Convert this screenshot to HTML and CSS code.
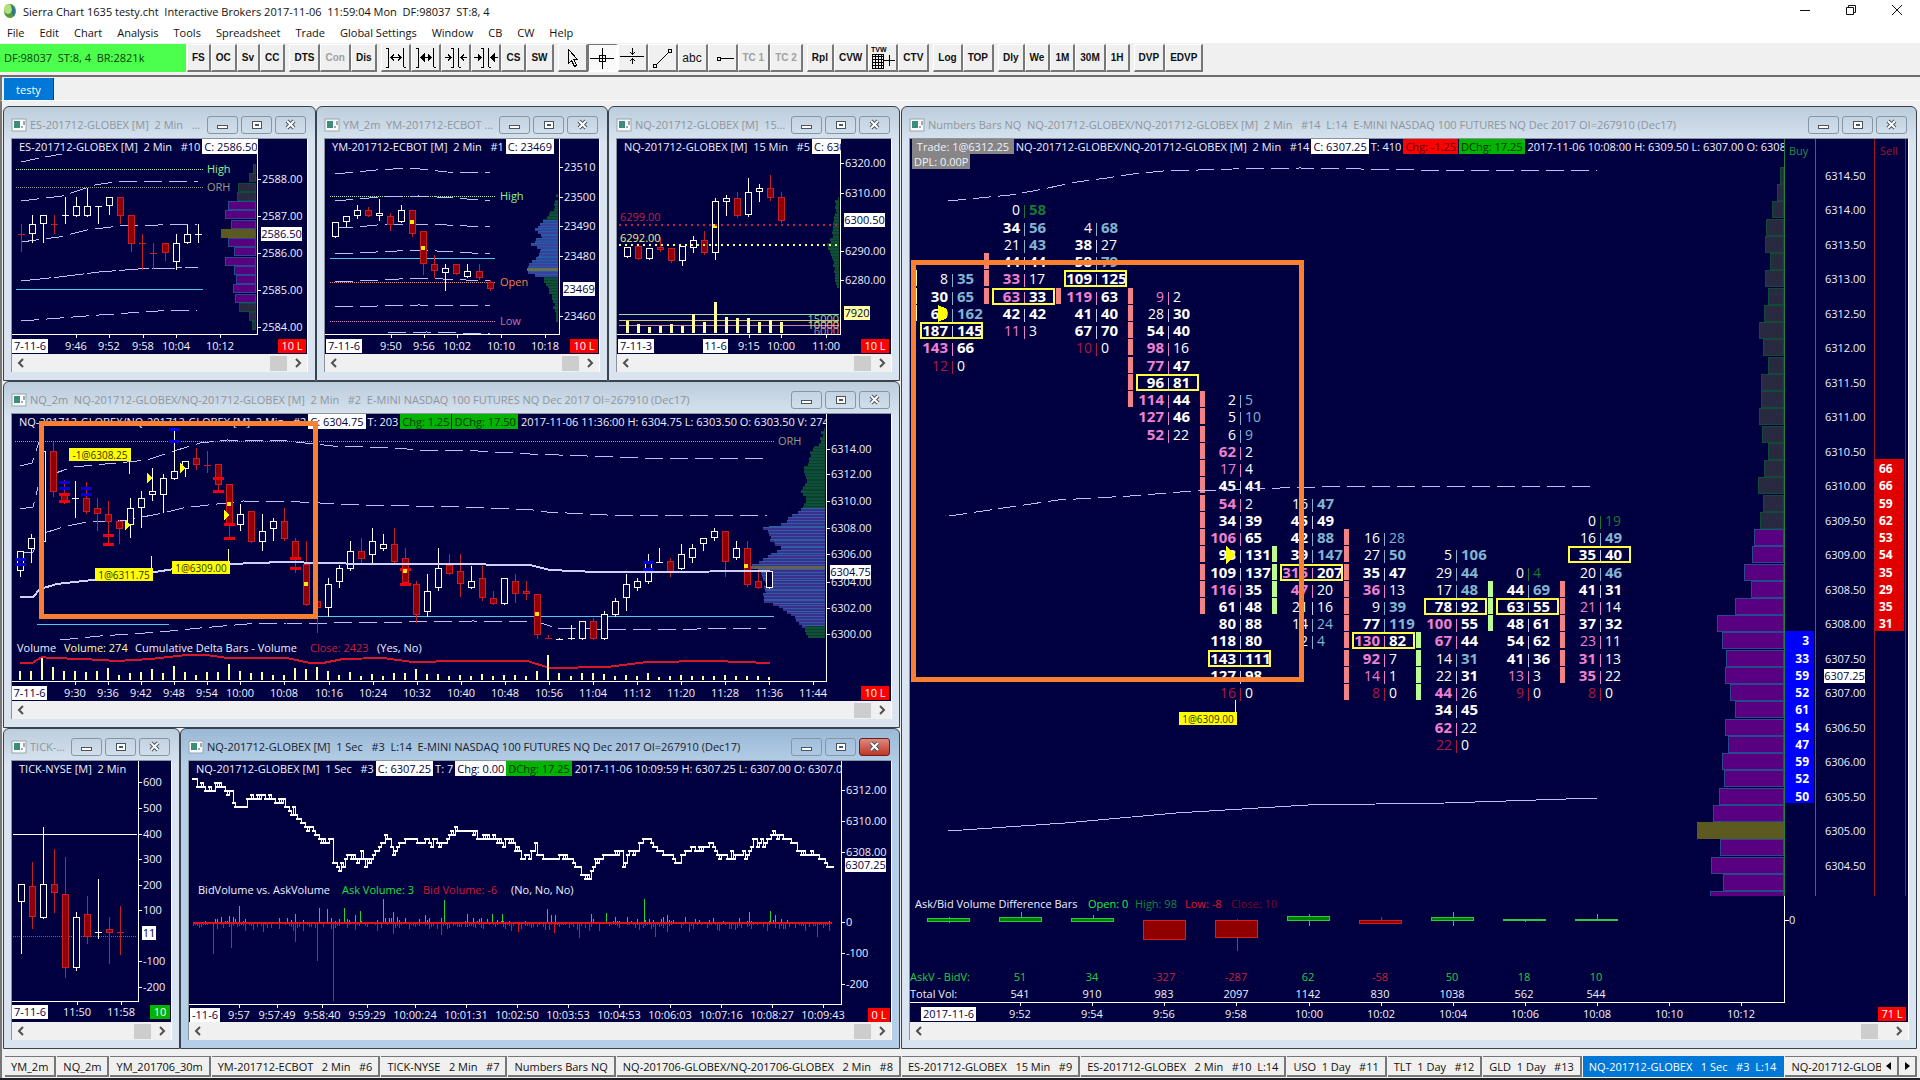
FILE: index.html
```
<!DOCTYPE html>
<html lang="en">
<head>
    <meta charset="utf-8">
    <title>Sierra Chart 1635 testy.cht</title>
    <link rel="stylesheet" href="styles.css">
</head>
<body>
    <header class="app-title">
        <svg class="app-icon" viewBox="0 0 14 16"><ellipse cx="7" cy="8" rx="6" ry="7" fill="#4f9a3a"/><ellipse cx="5" cy="6" rx="4" ry="5" fill="#b4e07c"/><path d="M8 2Q14 6 11 13Q8 10 9 7Z" fill="#2f6fa8"/></svg>
        <span class="app-name">Sierra Chart 1635 testy.cht&nbsp; Interactive Brokers 2017-11-06&nbsp; 11:59:04 Mon&nbsp; DF:98037&nbsp; ST:8, 4</span>
        <div class="app-controls">
            <button aria-label="Minimize"><svg viewBox="0 0 12 12"><path d="M1 6.5H11"/></svg></button>
            <button aria-label="Restore"><svg viewBox="0 0 12 12"><path d="M1.5 3.5H8.5V10.5H1.5ZM3.5 3V1.5H10.5V8.5H9"/></svg></button>
            <button aria-label="Close"><svg viewBox="0 0 12 12"><path d="M1 1L11 11M11 1L1 11"/></svg></button>
        </div>
    </header>

    <nav class="menu">
        <button>File</button><button>Edit</button><button>Chart</button><button>Analysis</button><button>Tools</button><button>Spreadsheet</button><button>Trade</button><button>Global Settings</button><button>Window</button><button>CB</button><button>CW</button><button>Help</button>
    </nav>

    <div class="toolbar">
        <div class="status">DF:98037&nbsp; ST:8, 4&nbsp; BR:2821k</div>
        <div class="tools"><button>FS</button><button>OC</button><button>Sv</button><button>CC</button></div>
        <div class="tools"><button>DTS</button><button disabled>Con</button><button>Dis</button></div>
        <div class="tools">
            <button class="icon" aria-label="Increase spacing"><svg viewBox="0 0 24 24"><path d="M4.5 2V21M4.5 21H2M19.5 2V21M19.5 21H22M4.5 2H2M7 11.5H17M10 8.5L7 11.5L10 14.5M14 8.5L17 11.5L14 14.5"/></svg></button>
            <button class="icon" aria-label="Increase spacing more"><svg viewBox="0 0 24 24"><path d="M4.5 2V21M4.5 21H2M19.5 2V21M19.5 21H22M4.5 2H2M7 11.5H17"/><path class="solid" d="M10 8.5L7 11.5L10 14.5ZM14 8.5L17 11.5L14 14.5Z"/></svg></button>
            <button class="icon" aria-label="Decrease spacing"><svg viewBox="0 0 24 24"><path d="M9.5 2V21M9.5 21H7M14.5 2V21M14.5 21H17M9.5 2H7M1 11.5H7M17 11.5H23M4 8.5L7 11.5L4 14.5M20 8.5L17 11.5L20 14.5"/></svg></button>
            <button class="icon" aria-label="Decrease spacing more"><svg viewBox="0 0 24 24"><path d="M9.5 2V21M9.5 21H7M14.5 2V21M14.5 21H17M9.5 2H7M0 11.5H7M17 11.5H24"/><path class="solid" d="M4 8.5L7 11.5L4 14.5ZM20 8.5L17 11.5L20 14.5Z"/></svg></button>
            <button>CS</button><button>SW</button>
        </div>
        <div class="tools">
            <button class="icon" aria-label="Pointer"><svg viewBox="0 0 24 24"><path d="M8.5 3.5V17.5L11.5 14.5L14.5 20.5L16.5 19.5L14 13.5H17.5Z"/></svg></button>
            <button class="icon pressed" aria-label="Crosshair"><svg viewBox="0 0 24 24"><path d="M0 12.5H24M12.5 2V23M9.5 9.5H15.5V15.5H9.5Z"/></svg></button>
            <button class="icon" aria-label="Horizontal line"><svg viewBox="0 0 24 24"><path d="M0 10.5H24M12.5 2V8M10 6L12.5 8.5L15 6M12.5 18V13M10 15L12.5 12.5L15 15"/></svg></button>
            <button class="icon" aria-label="Trend line"><svg viewBox="0 0 24 24"><path d="M3.5 18.5H6.5V21.5H3.5ZM18.5 3.5H21.5V6.5H18.5ZM6.5 18.5L18.5 6.5"/></svg></button>
            <button class="icon plain">abc</button>
            <button class="icon" aria-label="Ray"><svg viewBox="0 0 24 24"><path d="M7.5 11.5H10.5V14.5H7.5ZM10.5 12.5H24"/></svg></button>
            <button disabled>TC 1</button><button disabled>TC 2</button>
        </div>
        <div class="tools">
            <button>Rpl</button><button>CVW</button>
            <button class="icon" aria-label="Trade volume window"><svg viewBox="0 0 24 24"><text x="0" y="6">TVW</text><path d="M1.5 8.5H12.5V22.5H1.5ZM1 10.5H13M1 13.5H13M1 16.5H13M1 19.5H13M4.5 8V22M7.5 8V22M10.5 8V22M13 14.5H24M18.5 9V20"/></svg></button>
            <button>CTV</button>
        </div>
        <div class="tools"><button>Log</button><button>TOP</button></div>
        <div class="tools"><button>Dly</button><button>We</button><button>1M</button><button>30M</button><button>1H</button></div>
        <div class="tools"><button>DVP</button><button>EDVP</button></div>
    </div>

    <div class="chartbooks"><button>testy</button></div>

    <main class="workspace">
        <div class="left">
            <div class="row top-row">
                <section class="window">
                    <div class="caption"><span class="name">ES-201712-GLOBEX [M]&nbsp; 2 Min &nbsp; #10 L:14</span></div>
                    <div class="client">
                        <div class="chart" id="es">
                            <div class="legend axis-50"><span>ES-201712-GLOBEX [M]&nbsp; 2 Min &nbsp; #10</span><span class="white">C: 2586.50</span></div>
                        </div>
                    </div>
                </section>
                <section class="window">
                    <div class="caption"><span class="name">YM_2m&nbsp; YM-201712-ECBOT [M]&nbsp; 2 Min</span></div>
                    <div class="client">
                        <div class="chart" id="ym">
                            <div class="legend axis-40"><span>YM-201712-ECBOT [M]&nbsp; 2 Min &nbsp; #1</span><span class="white">C: 23469</span></div>
                        </div>
                    </div>
                </section>
                <section class="window">
                    <div class="caption"><span class="name">NQ-201712-GLOBEX [M]&nbsp; 15 Min</span></div>
                    <div class="client">
                        <div class="chart" id="nq15">
                            <div class="legend axis-50"><span>NQ-201712-GLOBEX [M]&nbsp; 15 Min &nbsp; #5</span><span class="white">C: 6300.50</span></div>
                        </div>
                    </div>
                </section>
            </div>

            <section class="window">
                <div class="caption"><span class="name">NQ_2m&nbsp; NQ-201712-GLOBEX/NQ-201712-GLOBEX [M]&nbsp; 2 Min &nbsp; #2&nbsp; E-MINI NASDAQ 100 FUTURES NQ Dec 2017 OI=267910 (Dec17)</span></div>
                <div class="client">
                    <div class="chart" id="nq2">
                        <div class="legend axis-64"><span>NQ-201712-GLOBEX/NQ-201712-GLOBEX [M]&nbsp; 2 Min &nbsp; #2</span><span class="white">C: 6304.75</span><span>T: 203</span><span class="green">Chg: 1.25</span><span class="green">DChg: 17.50</span><span>2017-11-06 11:36:00 H: 6304.75 L: 6303.50 O: 6303.50 V: 274</span></div>
                        <div class="highlight"></div>
                    </div>
                </div>
            </section>

            <div class="row bottom-row">
                <section class="window">
                    <div class="caption"><span class="name">TICK-NYSE [M]&nbsp; 2 Min</span></div>
                    <div class="client">
                        <div class="chart" id="tick">
                            <div class="legend axis-32"><span>TICK-NYSE [M]&nbsp; 2 Min</span></div>
                        </div>
                    </div>
                </section>
                <section class="window active">
                    <div class="caption"><span class="name">NQ-201712-GLOBEX [M]&nbsp; 1 Sec &nbsp; #3&nbsp; L:14&nbsp; E-MINI NASDAQ 100 FUTURES NQ Dec 2017 OI=267910 (Dec17)</span></div>
                    <div class="client">
                        <div class="chart" id="sec">
                            <div class="legend axis-50"><span>NQ-201712-GLOBEX [M]&nbsp; 1 Sec &nbsp; #3</span><span class="white">C: 6307.25</span><span>T: 7</span><span class="white">Chg: 0.00</span><span class="green">DChg: 17.25</span><span>2017-11-06 10:09:59 H: 6307.25 L: 6307.00 O: 6307.00</span></div>
                        </div>
                    </div>
                </section>
            </div>
        </div>

        <section class="window">
            <div class="caption"><span class="name">Numbers Bars NQ&nbsp; NQ-201712-GLOBEX/NQ-201712-GLOBEX [M]&nbsp; 2 Min &nbsp; #14&nbsp; L:14&nbsp; E-MINI NASDAQ 100 FUTURES NQ Dec 2017 OI=267910 (Dec17)</span></div>
            <div class="client">
                <div class="chart" id="bars">
                    <div class="legend axis-124 flush"><span class="gray">&nbsp;Trade: 1@6312.25&nbsp;</span><span>NQ-201712-GLOBEX/NQ-201712-GLOBEX [M]&nbsp; 2 Min &nbsp; #14</span><span class="white">C: 6307.25</span><span>T: 410</span><span class="red">Chg: -1.25</span><span class="green">DChg: 17.25</span><span>2017-11-06 10:08:00 H: 6309.50 L: 6307.00 O: 6308.00</span></div>
                    <div class="legend second"><span class="gray">DPL: 0.00P</span></div>
                </div>
            </div>
        </section>
    </main>

    <footer class="sheets">
        <div class="sheet-list">
            <button>YM_2m</button><button>NQ_2m</button><button>YM_201706_30m</button><button>YM-201712-ECBOT &nbsp; 2 Min &nbsp; #6</button><button>TICK-NYSE &nbsp; 2 Min &nbsp; #7</button><button>Numbers Bars NQ</button><button>NQ-201706-GLOBEX/NQ-201706-GLOBEX &nbsp; 2 Min &nbsp; #8</button><button>ES-201712-GLOBEX &nbsp; 15 Min &nbsp; #9</button><button>ES-201712-GLOBEX &nbsp; 2 Min &nbsp; #10&nbsp; L:14</button><button>USO&nbsp; 1 Day &nbsp; #11</button><button>TLT&nbsp; 1 Day &nbsp; #12</button><button>GLD&nbsp; 1 Day &nbsp; #13</button><button class="current">NQ-201712-GLOBEX &nbsp; 1 Sec &nbsp; #3&nbsp; L:14</button><button>NQ-201712-GLOBEX</button>
        </div>
        <button class="step" aria-label="Previous"><svg viewBox="0 0 8 10"><path d="M6 1V9L1 5Z"/></svg></button>
        <button class="step" aria-label="Next"><svg viewBox="0 0 8 10"><path d="M2 1V9L7 5Z"/></svg></button>
    </footer>
    <script src="charts.js"></script>
</body>
</html>
```
FILE: styles.css
```
* {
    box-sizing: border-box;
}

body {
    display: flex;
    flex-direction: column;
    height: 100vh;
    margin: 0;
    overflow: hidden;
    background-color: #f0f0f0;
    border-bottom: 2px solid #202024;
    font-family: "Open Sans", "Noto Sans", sans-serif;
    font-size: 11px;
    color: #111;
}

button {
    font: inherit;
    color: inherit;
    padding: 0;
    border: none;
    background: none;
}

/* application frame */
.app-title {
    display: flex;
    align-items: center;
    flex: 0 0 22px;
    padding-left: 3px;
    background-color: white;
}

.app-icon {
    width: 14px;
    height: 16px;
    margin-right: 6px;
}

.app-controls {
    display: flex;
    margin-left: auto;
}

.app-controls button {
    width: 46px;
    height: 20px;
}

.app-controls svg {
    width: 12px;
    height: 12px;
    fill: none;
    stroke: #111;
}

.menu {
    display: flex;
    gap: 15px;
    flex: 0 0 21px;
    padding-left: 7px;
    background-color: white;
}

.toolbar {
    display: flex;
    gap: 4px;
    flex: 0 0 34px;
    padding: 1px 0 3px;
    border-bottom: 2px solid #6e6e6a;
}

.status {
    width: 186px;
    padding-left: 4px;
    margin-right: -3px;
    background-color: #4dff4d;
    line-height: 28px;
    color: #0a3a0a;
}

.tools {
    display: flex;
}

.tools button {
    padding: 0 4px;
    border: 1px solid;
    border-color: #fff #777 #777 #fff;
    border-right-width: 2px;
    border-bottom-width: 2px;
    background-color: #f0f0f0;
    font-family: "Liberation Sans", Arial, sans-serif;
    font-weight: bold;
    font-size: 10px;
}

.tools button:disabled {
    color: #a0a0a0;
}

.tools .icon {
    width: 30px;
    padding: 0;
}

.tools .plain {
    font-weight: normal;
    font-size: 12px;
}

.tools .pressed {
    background-color: #fafafa;
    border-color: #777 #fff #fff #777;
}

.icon svg {
    display: block;
    width: 24px;
    height: 24px;
    margin: 0 auto;
    fill: none;
    stroke: #000;
    shape-rendering: crispEdges;
}

.icon .solid {
    fill: #000;
}

.icon text {
    fill: #000;
    stroke: none;
    font-size: 7px;
}

.chartbooks {
    flex: 0 0 24px;
    padding: 1px 0 0 2px;
    border-left: 2px solid #777;
    border-bottom: 1px solid white;
}

.chartbooks button {
    display: block;
    width: 50px;
    height: 22px;
    background-color: #0078d7;
    border-right: 1px solid #333;
    color: white;
}

/* chart windows */
.workspace {
    display: grid;
    grid-template-columns: minmax(0, 897fr) minmax(0, 1016fr);
    column-gap: 1px;
    flex: 1;
    min-height: 0;
    padding: 5px 3px 0 1px;
    border-left: 2px solid #777;
    background-color: #f0f0f0;
}

.left {
    display: grid;
    grid-template-rows: minmax(0, 275fr) minmax(0, 347fr) minmax(0, 321fr);
    min-height: 0;
}

.row {
    display: grid;
    min-height: 0;
}

.top-row {
    grid-template-columns: minmax(0, 313fr) minmax(0, 292fr) minmax(0, 292fr);
}

.bottom-row {
    grid-template-columns: minmax(0, 177fr) minmax(0, 720fr);
}

.window {
    display: flex;
    flex-direction: column;
    min-height: 0;
    padding: 0 7px 8px;
    border: 1px solid #39434d;
    border-radius: 6px 6px 0 0;
    background: linear-gradient(#bccddc, #d9e4f0 36px);
}

.window.active {
    background: linear-gradient(#9ab8d6, #b6cfe8 36px);
}

.caption {
    display: flex;
    align-items: center;
    gap: 3px;
    flex: 0 0 31px;
    padding: 4px 2px 0 0;
    color: #8d959d;
}

.active .caption {
    color: #16222e;
}

.caption svg {
    flex: none;
    width: 16px;
    height: 14px;
}

.caption .name {
    flex: 1;
    overflow: hidden;
    text-overflow: ellipsis;
    white-space: nowrap;
}

.caption button {
    flex: none;
    width: 31px;
    height: 18px;
    border: 1px solid #8796a5;
    border-radius: 3px;
}

.caption button svg {
    display: block;
    width: 13px;
    height: 12px;
    margin: 0 auto;
    fill: #fff;
    stroke: #4a545e;
}

.caption .close path:first-child {
    stroke-width: 4;
}

.caption .close path + path {
    stroke: #fff;
    stroke-width: 2;
}

.active .caption .close {
    background: linear-gradient(#dc8a80, #c03525);
    border-color: #6a2018;
}

.client {
    display: flex;
    flex-direction: column;
    flex: 1;
    min-height: 0;
    border: 1px solid #8b949c;
    border-bottom: none;
    border-right-color: #fff;
}

.chart {
    position: relative;
    flex: 1;
    min-height: 0;
    background-color: #000040;
    overflow: hidden;
}

.plot {
    display: block;
    width: 100%;
    height: 100%;
}

.legend {
    position: absolute;
    top: 0;
    left: 5px;
    display: flex;
    height: 15px;
    overflow: hidden;
    line-height: 15px;
    color: #f0f0ff;
    white-space: nowrap;
}

.legend span {
    flex: none;
    padding: 0 2px;
}

.flush, .second {
    left: 2px;
}

.second {
    top: 15px;
}

.axis-32 { right: 32px; }
.axis-40 { right: 40px; }
.axis-50 { right: 50px; }
.axis-64 { right: 64px; }
.axis-124 { right: 124px; }

.legend .white {
    background-color: white;
    color: #000040;
}

.legend .green {
    margin-right: 1px;
    background-color: #00b400;
    color: #003000;
}

.legend .red {
    margin-right: 1px;
    background-color: #f00;
    color: #500;
}

.legend .gray {
    background-color: #868686;
}

/* marked trades, lies over the legend as well */
.highlight {
    position: absolute;
    top: 7px;
    left: 27px;
    width: 279px;
    height: 198px;
    border: 5px solid #f88030;
}

.scroll {
    display: flex;
    align-items: center;
    flex: 0 0 18px;
    padding: 0 5px;
    background-color: #f0f0f0;
}

.scroll .thumb {
    width: 17px;
    height: 15px;
    margin: 0 8px 0 auto;
    background-color: #cdcdcd;
}

.workspace > .window .thumb {
    margin-right: 18px;
}

.scroll svg {
    display: block;
    width: 7px;
    height: 10px;
    fill: none;
    stroke: #505050;
    stroke-width: 2;
}

/* drawing */
.plot text {
    font-size: 11px;
    fill: #f0f0ff;
    white-space: pre;
}

.plot .cell {
    font-size: 14px;
}

.plot .heavy {
    font-size: 15px;
    font-weight: bold;
}

.plot .bold {
    font-weight: bold;
}

.plot .ladder {
    font-size: 12px;
    font-weight: bold;
}

.plot .order {
    font-size: 10px;
    fill: #303000;
}

/* bottom tabs */
.sheets {
    display: flex;
    flex: 0 0 29px;
    padding: 7px 3px 1px;
    border-left: 2px solid #777;
}

.sheet-list {
    display: flex;
    flex: 1;
    gap: 1px;
    min-width: 0;
    overflow: hidden;
}

.sheets button {
    flex: none;
    padding: 0 6px;
    border: 1px solid #777;
    border-width: 1px 2px 2px 0;
    background-color: #f0f0f0;
    white-space: nowrap;
}

.sheets .current {
    background-color: #0078d7;
    border-color: #0078d7;
    color: white;
}

.sheets .step {
    width: 18px;
    padding: 0;
}

.step svg {
    width: 8px;
    height: 10px;
}
```
FILE: charts.js
```
const WHITE = '#ffffff', RED = '#c81e28', DARK_RED = '#900008', DASH = '#c0c0f0';
const CYAN = '#50c8f0', YELLOW = '#ffff00', PALE = '#ffffa0', BG = '#000040';

const appIcon = '<svg viewBox="0 0 16 14"><rect x="1" y="1" width="14" height="12" fill="#f8fcfc" stroke="#9aa4ac"/><rect x="3" y="3" width="6" height="7" fill="#3c8c7c"/><path d="M10 9H12M13 3V7" stroke="#555"/></svg>';
const captionButtons = '<button aria-label="Minimize"><svg viewBox="0 0 13 12"><rect x="1.5" y="6.5" width="10" height="3"/></svg></button>' +
    '<button aria-label="Restore"><svg viewBox="0 0 13 12"><rect x="2.5" y="2.5" width="9" height="7"/><rect x="5.5" y="5.5" width="3" height="1"/></svg></button>' +
    '<button class="close" aria-label="Close"><svg viewBox="0 0 13 12"><path d="M3 2L10 9M10 2L3 9"/><path d="M3 2L10 9M10 2L3 9"/></svg></button>';
const scrollBar = '<button aria-label="Scroll left"><svg viewBox="0 0 7 10"><path d="M6 1L2 5L6 9"/></svg></button>' +
    '<div class="thumb"></div>' +
    '<button aria-label="Scroll right"><svg viewBox="0 0 7 10"><path d="M1 1L5 5L1 9"/></svg></button>';

document.querySelectorAll('.window').forEach(win => {
    const caption = win.querySelector('.caption');
    caption.insertAdjacentHTML('afterbegin', appIcon);
    caption.insertAdjacentHTML('beforeend', captionButtons);
    const bar = document.createElement('div');
    bar.className = 'scroll';
    bar.innerHTML = scrollBar;
    win.querySelector('.client').appendChild(bar);
});

// same sequence on every load
let seed = 7;
function rnd() {
    seed = (seed * 16807) % 2147483647;
    return seed / 2147483647;
}

function rect(x, y, w, h, fill, stroke, sw) {
    return `<rect x="${x}" y="${y}" width="${w}" height="${h}" fill="${fill}"` +
        (stroke ? ` stroke="${stroke}" stroke-width="${sw || 1}"` : '') + '/>';
}
function vline(x, y1, y2, color) {
    return rect(x, y1, 1, Math.max(1, y2 - y1), color);
}
function hline(x1, x2, y, color, h) {
    return rect(x1, y, x2 - x1, h || 1, color);
}
function text(x, y, s, color, anchor, cls) {
    return `<text x="${x}" y="${y + 4}"` + (color ? ` style="fill:${color}"` : '') +
        ` text-anchor="${anchor || 'start'}" class="${cls || ''}">${s}</text>`;
}
function tag(x1, x2, y, s, bg, color, cls) {
    return rect(x1, y - 7, x2 - x1, 14, bg) + text((x1 + x2) / 2, y, s, color, 'middle', cls);
}
function line(points, color, dash, w) {
    return `<polyline points="${points}" fill="none" stroke="${color}" stroke-width="${w || 1}"` +
        (dash ? ` stroke-dasharray="${dash}"` : '') + '/>';
}
function dashed(points) {
    return line(points, DASH, '18 7');
}
function dotted(x1, x2, y, color) {
    return line(`${x1},${y + 0.5} ${x2},${y + 0.5}`, color, '1 1');
}

// one candle: high, body top, body bottom, low, r or w
function candles(start, step, rows) {
    return rows.trim().split('\n').map((row, i) => {
        const [hi, top, bot, lo, kind] = row.trim().split(' ');
        const x = Math.round(start + step * i);
        const color = kind === 'r' ? RED : WHITE;
        const h = bot - top;
        if (h < 3) return vline(x, +hi, +lo, color) + hline(x - 3, x + 4, +top, color);
        return vline(x, +hi, +top, color) + vline(x, +bot, +lo, color) +
            rect(x - 2.5, +top + 0.5, 6, h - 1, kind === 'r' ? DARK_RED : BG, color);
    }).join('');
}
function axes(left, right, bottom, top) {
    return vline(right, top, bottom, WHITE) + hline(left, right + 1, bottom, WHITE);
}
function prices(axisX, x, list) {
    return list.map(([y, s]) => hline(axisX, axisX + 4, y, WHITE) + text(x, y, s)).join('');
}
function times(y, axisY, list) {
    return list.map(([x, s]) => vline(Math.round(x), axisY, axisY + 4, WHITE) + text(x, y, s, '', 'middle')).join('');
}
function squares(list) {
    return list.map(([x, y]) => rect(x - 2, y - 2, 4, 4, '#ffe800')).join('');
}
// volume profile interpolated between [y, left edge, fill, stroke] points
function profile(right, pitch, points) {
    let out = '';
    for (let i = 0; i < points.length - 1; i++) {
        const [y1, x1, fill, stroke] = points[i], [y2, x2] = points[i + 1];
        for (let y = y1; y < y2; y += pitch) {
            const x = Math.round(x1 + (x2 - x1) * (y - y1) / (y2 - y1) + rnd() * 3 - 1);
            out += rect(x, Math.round(y), right - x, pitch, fill) + hline(x, right, Math.round(y), stroke);
        }
    }
    return out;
}
function steps(right, top, pitch, edges, pick) {
    return edges.map((x, i) => {
        const [fill, stroke] = pick(i);
        return rect(x + 0.5, Math.round(top + pitch * i) + 0.5, right - x, Math.round(pitch) - 1, fill, stroke);
    }).join('');
}
function draw(id, box, content) {
    document.getElementById(id).insertAdjacentHTML('afterbegin',
        `<svg class="plot" viewBox="${box}" preserveAspectRatio="xMinYMin meet" shape-rendering="crispEdges">${content}</svg>`);
}

const GRAY = ['#292942', '#124a38'], PURPLE = ['#580080', '#284890'], OLIVE = ['#5c5a20', '#5c5a20'];

// ---- ES 2 min
draw('es', '12 139 295 215',
    steps(255, 164, 9.25, [253, 249, 238, 237, 228, 225, 231, 221, 228, 234, 225, 234, 236, 233, 235, 239, 249, 252],
        i => i === 7 ? OLIVE : (i < 4 || i > 14) ? GRAY : PURPLE) +
    dotted(16, 203, 169, '#a0f0a0') + dotted(16, 203, 187, '#a0a080') +
    hline(16, 203, 289, CYAN) +
    dashed('21,162 40,158 62,154') + dashed('21,201 62,196 95,185 121,181 198,181') +
    dashed('21,242 59,237 87,230 119,226 198,224') +
    line('21,281 59,277 99,272 138,269 176,268 198,267', DASH, '30 3') +
    dashed('21,321 99,315 158,311 198,310') +
    candles(21, 11.04, `224 234 234 252 r
        215 224 234 243 w
        215 215 224 243 w
        215 224 224 234 r
        197 215 215 224 w
        197 206 216 216 w
        188 206 216 216 w
        206 206 206 224 w
        197 197 206 215 w
        197 197 216 224 r
        215 215 244 252 r
        234 243 243 270 r
        243 253 253 269 r
        243 243 253 261 r
        234 243 262 270 w
        225 234 243 243 w
        224 234 234 243 w`) +
    text(207, 169, 'High', '#90f090') + text(207, 187, 'ORH', '#a09c80') +
    axes(12, 257, 334, 139) +
    prices(257, 262, [[179, '2588.00'], [216, '2587.00'], [253, '2586.00'], [290, '2585.00'], [327, '2584.00']]) +
    tag(261, 302, 234, '2586.50', WHITE, BG) +
    times(346, 334, [[76, '9:46'], [109, '9:52'], [143, '9:58'], [176, '10:04'], [220, '10:12']]) +
    tag(12, 48, 346, '7-11-6', WHITE, BG) + tag(278, 306, 346, '10 L', '#f00', WHITE));

// ---- YM 2 min
const G = ['#105038', '#0a4030'], B = ['#3840a0', '#2060a0'];
draw('ym', '325 139 274 215',
    profile(558, 3, [[194, 557, ...G], [208, 553, ...G], [213, 548, ...G], [220, 542, ...B], [228, 535, ...B], [235, 541, ...B],
        [243, 531, ...B], [250, 541, ...B], [257, 535, ...B], [263, 528, ...B], [268, 525, '#706c50', '#706c50'], [271, 528, ...B], [277, 542, ...G],
        [285, 548, ...G], [300, 552, ...G], [310, 555, ...G], [320, 557]]) +
    dotted(330, 495, 196, '#a0f0a0') + dotted(330, 495, 282, '#f09050') + dotted(330, 495, 321, '#e080c0') +
    hline(330, 495, 258, CYAN) +
    dashed('335,174 376,170 411,168 447,172 490,173') + dashed('335,201 380,197 419,196 455,198 490,201') +
    dashed('335,227 356,227 388,224 427,224 467,226 490,226') + dashed('335,254 376,252 419,250 490,254') +
    dashed('335,282 380,280 419,278 490,281') + dashed('335,307 419,305 490,306') + dashed('388,333 427,332 490,334') +
    candles(335, 11.04, `222 222 237 237 w
        216 216 222 227 w
        205 210 216 219 w
        207 210 216 216 r
        199 213 216 221 w
        213 216 225 231 r
        205 210 222 222 w
        210 210 234 237 r
        231 231 264 275 r
        255 264 271 278 r
        264 268 273 291 w
        264 264 274 275 r
        264 271 277 277 w
        264 271 278 280 r
        280 282 289 291 r`) +
    squares([[412, 222], [423, 248]]) +
    text(500, 196, 'High', '#90f090') + text(500, 282, 'Open', '#f08040') + text(500, 321, 'Low', '#d070a0') +
    axes(325, 559, 334, 139) +
    prices(559, 564, [[167, '23510'], [197, '23500'], [226, '23490'], [256, '23480'], [316, '23460']]) +
    tag(563, 595, 289, '23469', WHITE, BG) +
    times(346, 334, [[391, '9:50'], [424, '9:56'], [457, '10:02'], [501, '10:10'], [545, '10:18']]) +
    tag(326, 362, 346, '7-11-6', WHITE, BG) + tag(570, 598, 346, '10 L', '#f00', WHITE));

// ---- NQ 15 min
draw('nq15', '617 139 274 215',
    profile(839, 3, [[197, 836, ...G], [210, 835, ...G], [235, 832, ...G], [240, 829, ...G], [244, 826, ...G], [250, 829, ...G],
        [258, 832, ...G], [270, 834, ...G], [286, 836]]) +
    hline(619, 839, 314, '#a0e0a0') + hline(619, 839, 320, '#d0c860') + hline(619, 839, 325, '#d080a0') +
    [12, 9, 6, 7, 9, 7, 19, 11, 31, 16, 15, 15, 11, 13, 11].map((h, i) => rect(626 + 11 * i, 333 - h, 3, h, PALE)).join('') +
    candles(627, 11, `247 247 257 258 w
        246 246 259 259 r
        248 248 259 259 w
        237 247 250 252 r
        248 248 261 263 r
        246 246 261 266 w
        236 240 248 253 w
        231 240 253 255 r
        198 201 253 260 w
        195 198 202 216 w
        192 198 216 218 r
        178 192 215 217 w
        184 188 192 202 w
        175 188 198 201 r
        192 197 221 223 r`) +
    squares([[715, 226]]) +
    line('619,225 838,225', '#c02040', '2 4', 2) + line('619,245 838,245', '#ffff60', '2 4', 2) +
    text(620, 217, '6299.00', '#c02040') + text(620, 238, '6292.00', '#f0f080') +
    text(839, 319, '15000', '#90d090', 'end') + text(839, 325, '10000', '#e0d080', 'end') + text(839, 331, '6000', '#d080a0', 'end') +
    rect(617, 334, 222, 10, BG) +
    axes(617, 840, 334, 139) +
    prices(840, 845, [[163, '6320.00'], [193, '6310.00'], [251, '6290.00'], [280, '6280.00']]) +
    tag(844, 885, 220, '6300.50', WHITE, BG) + tag(844, 870, 313, '7920', PALE, BG) +
    times(346, 334, [[749, '9:15'], [781, '10:00'], [826, '11:00']]) +
    tag(618, 654, 346, '7-11-3', WHITE, BG) + tag(703, 728, 346, '11-6', WHITE, BG) + tag(861, 889, 346, '10 L', '#f00', WHITE));

// ---- NQ 2 min
const mark = (color, list) => list.map(([i, y]) => rect(Math.round(15 + 11.01 * i), y - 1, 11, 3, color)).join('');
const flag = (x1, x2, y, s) => rect(x1, y - 7, x2 - x1, 13, YELLOW) + text((x1 + x2) / 2, y, s, '', 'middle', 'order');
const V = ['#3a3090', '#305ca0'];
const volumes = [9, 9, 22, 13, 9, 9, 8, 9, 12, 5, 7, 8, 11, 7, 14, 8, 5, 8, 8, 16, 9, 7, 8, 5, 5, 12, 11, 13, 9, 5, 8, 4, 6, 4, 7, 7, 11,
    6, 6, 4, 5, 4, 6, 4, 5, 5, 4, 9, 25, 7, 4, 7, 7, 6, 4, 5, 4, 7, 3, 4, 5, 4, 4, 4, 5, 4, 4, 4, 3];
draw('nq2', '12 414 879 287',
    profile(825, 3, [[428, 822, ...G], [443, 820, ...G], [448, 811, ...G], [460, 809, ...G], [470, 802, ...G], [480, 806, ...G], [490, 802, ...G],
        [497, 806, ...G], [508, 801, ...V], [517, 788, ...V], [523, 782, ...V], [527, 764, ...V], [540, 772, ...V], [547, 780, ...V], [555, 768, ...V],
        [566, 750, '#686050', '#686050'], [569, 757, ...V], [580, 766, ...V], [590, 764, ...V], [600, 762, ...V], [605, 778, ...V], [613, 790, ...V],
        [626, 803, ...G], [638, 808]]) +
    dotted(15, 774, 441, '#a0a080') +
    hline(37, 169, 624, CYAN) + hline(317, 774, 616, CYAN) +
    dashed('20,466 32,463 35,455 39,442') +
    dashed('50,475 73,467 127,462 147,460 174,451 200,443 227,440 287,441 333,446 393,448 420,450 460,450 530,454 587,456 640,458 763,459') +
    dashed('20,509 33,507 38,487') +
    dashed('44,533 67,526 87,522 127,520 163,513 183,508 217,504 243,501 300,502 360,505 460,507 533,510 547,512 607,515 767,515') +
    dashed('20,553 33,552 37,543') +
    dashed('60,640 100,636 160,632 200,628 247,624 287,623 333,623 473,621 537,622 557,628 627,630 767,628') +
    candles(20, 11.01, `551 551 571 577 w
        534 538 549 563 w
        451 451 542 542 w
        442 451 492 497 r
        480 494 502 504 r
        481 498 498 518 w
        482 498 512 514 r
        498 508 514 531 r
        501 514 522 545 r
        520 521 529 544 r
        498 508 525 538 w
        491 498 508 528 w
        468 491 495 501 w
        474 478 495 513 w
        429 471 479 479 w
        461 461 469 477 w
        448 458 465 470 r
        451 465 465 473 r
        464 464 485 492 r
        484 484 524 539 r
        504 514 525 531 w
        511 511 542 542 r
        514 531 542 551 w
        518 521 529 541 w
        508 521 539 541 r
        538 541 558 573 r
        541 564 605 605 r
        564 601 608 633 r
        578 584 608 617 w
        565 568 582 588 w
        541 551 569 571 w
        538 551 559 563 r
        528 541 555 563 w
        534 544 549 551 w
        528 544 562 562 r
        548 558 583 583 r
        581 584 615 623 r
        574 591 612 617 w
        548 568 588 591 w
        554 565 574 574 r
        554 571 584 597 r
        566 581 588 588 w
        566 578 598 601 r
        591 598 604 604 r
        578 578 604 604 w
        574 581 594 603 r
        581 591 594 600 r
        594 594 635 639 r
        635 638 639 639 r
        638 639 639 640 w
        625 638 639 640 w
        621 621 639 639 w
        618 621 639 639 r
        611 614 639 639 w
        598 601 615 617 w
        574 584 598 611 w
        578 581 588 591 w
        554 563 582 584 w
        548 562 562 563 w
        558 561 572 577 r
        544 554 569 569 w
        544 548 558 563 w
        538 538 544 551 w
        528 531 538 541 w
        531 531 562 577 r
        541 548 558 560 w
        541 548 585 587 r
        571 581 588 588 r
        571 571 588 588 w`) +
    line('20,597 33,597 40,589 57,584 93,580 143,574 180,568 230,564 283,562 367,564 440,564 530,565 550,570 597,572 673,572 747,571 770,571', '#d0d0f8', '', 2) +
    mark('#0000e0', [[0, 559], [0, 564], [4, 482], [4, 488], [6, 488], [6, 494], [14, 429], [14, 441], [57, 562], [57, 569]]) +
    mark('#f00010', [[4, 494], [4, 501], [8, 535], [8, 544], [18, 478], [18, 491], [19, 524], [19, 538], [25, 558], [25, 568], [35, 569], [35, 584]]) +
    squares([[229, 504], [306, 584], [405, 571], [537, 614], [746, 566]]) +
    [[125, 525], [147, 478], [180, 468], [224, 515]].map(([x, y]) => `<path d="M${x} ${y - 5}L${x + 5} ${y}L${x} ${y + 5}Z" fill="${YELLOW}"/>`).join('') +
    vline(129, 461, 474, PALE) + vline(151, 556, 570, PALE) + vline(228, 549, 562, PALE) +
    flag(69, 131, 455, '-1@6308.25') + flag(95, 153, 575, '1@6311.75') + flag(172, 230, 568, '1@6309.00') +
    rect(12, 640, 814, 41, BG) +
    line('20,663 32,663 42,657 50,658 83,659 117,661 150,659 187,655 207,655 227,658 287,658 310,663 323,663 343,659 383,658 413,662 460,661 527,661 550,668 607,667 647,662 713,661 770,663', '#d81828', '', 2) +
    volumes.map((h, i) => rect(Math.round(19 + 11.01 * i), 680 - h, 2, h, PALE)).join('') +
    text(17, 648, 'Volume') + text(64, 648, 'Volume: 274', PALE) + text(135, 648, 'Cumulative Delta Bars - Volume') +
    text(310, 648, 'Close: 2423', '#c82038') + text(377, 648, '(Yes, No)') +
    text(778, 441, 'ORH', '#a09c80') +
    axes(12, 826, 681, 414) +
    prices(826, 831, [[449, '6314.00'], [474, '6312.00'], [501, '6310.00'], [528, '6308.00'], [554, '6306.00'], [582, '6304.00'], [608, '6302.00'], [634, '6300.00']]) +
    tag(830, 871, 572, '6304.75', WHITE, BG) +
    times(693, 681, [[75, '9:30'], [108, '9:36'], [141, '9:42'], [174, '9:48'], [207, '9:54'], [240, '10:00'], [284, '10:08'], [329, '10:16'],
        [373, '10:24'], [417, '10:32'], [461, '10:40'], [505, '10:48'], [549, '10:56'], [593, '11:04'], [637, '11:12'], [681, '11:20'],
        [725, '11:28'], [769, '11:36'], [813, '11:44']]) +
    tag(12, 47, 693, '7-11-6', WHITE, BG) + tag(861, 889, 693, '10 L', '#f00', WHITE));

// ---- TICK
draw('tick', '12 761 159 261',
    hline(13, 137, 834, WHITE) + dotted(13, 137, 936, '#508050') +
    candles(21, 11, `884 884 902 954 w
        862 886 917 929 r
        827 884 918 918 w
        849 884 893 913 r
        857 894 968 978 r
        912 917 968 971 w
        896 914 937 944 r
        879 932 932 939 w
        917 929 933 964 r
        906 932 934 955 r`) +
    axes(12, 138, 1001, 761) +
    prices(138, 143, [[782, '600'], [808, '500'], [834, '400'], [859, '300'], [885, '200'], [910, '100'], [961, '-100'], [987, '-200']]) +
    tag(142, 156, 933, '11', WHITE, BG) +
    times(1012, 1001, [[77, '11:50'], [121, '11:58']]) +
    tag(12, 48, 1012, '7-11-6', WHITE, BG) + tag(150, 170, 1012, '10', '#00b400', WHITE));

// ---- NQ 1 second
const path = [[193, 778], [198, 786], [222, 785], [230, 791], [235, 807], [245, 805], [247, 798], [263, 797], [280, 797], [293, 811],
    [298, 822], [313, 832], [320, 840], [331, 840], [333, 865], [340, 865], [347, 857], [353, 858], [357, 865], [361, 850], [365, 863],
    [372, 860], [380, 848], [385, 833], [390, 838], [393, 850], [400, 842], [410, 838], [443, 842], [448, 836], [457, 826], [473, 830],
    [480, 839], [495, 835], [502, 843], [513, 842], [522, 856], [530, 855], [535, 843], [538, 855], [567, 857], [580, 868], [583, 879],
    [590, 873], [593, 862], [607, 850], [622, 852], [623, 862], [632, 850], [647, 838], [657, 852], [670, 853], [676, 863], [683, 850],
    [712, 847], [718, 858], [727, 857], [740, 852], [747, 855], [752, 843], [770, 840], [772, 832], [790, 837], [800, 852], [815, 852],
    [820, 862], [832, 865]];
let secBars = '';
let seg = 0;
let last = 778;
for (let x = 193; x < 832; x += 2) {
    while (path[seg + 1][0] <= x) seg++;
    const [x1, y1] = path[seg], [x2, y2] = path[seg + 1];
    const y = 778 + Math.round((y1 + (y2 - y1) * (x - x1) / (x2 - x1) - 778 + rnd() * 8 - 4) / 4) * 4;
    secBars += hline(x - 1, x + 3, y, WHITE, 2) + vline(x, Math.min(y, last), Math.max(y, last) + 2, WHITE);
    last = y;
}
let bidAsk = '';
for (let x = 193; x < 832; x += 2) {
    bidAsk += vline(x, 923 - Math.floor(rnd() * rnd() * rnd() * 12), 923, '#20d830') +
        vline(x, 923, 924 + Math.floor(rnd() * rnd() * 9), '#e81018');
}
[[239, 17], [295, 9], [319, 15], [327, 14], [344, 15], [360, 12], [383, 24], [393, 11], [444, 23], [467, 9], [492, 9], [502, 9], [547, 14],
    [591, 9], [606, 10], [644, 24], [749, 11], [770, 12], [775, 8]].forEach(([x, h]) => bidAsk += vline(x, 923 - h, 923, '#20d830'));
[[213, 31], [231, 25], [295, 19], [317, 38], [333, 78], [393, 11], [441, 12], [518, 9], [554, 10], [579, 15], [655, 14], [667, 9],
    [817, 14]].forEach(([x, h]) => bidAsk += vline(x, 923, 923 + h, '#e81018'));
draw('sec', '189 761 702 261',
    secBars + bidAsk + hline(193, 832, 922, '#e81018', 2) +
    text(198, 890, 'BidVolume vs. AskVolume') + text(342, 890, 'Ask Volume: 3', '#20e040') +
    text(423, 890, 'Bid Volume: -6', '#d01830') + text(511, 890, '(No, No, No)') +
    axes(189, 841, 1004, 761) +
    prices(841, 846, [[790, '6312.00'], [821, '6310.00'], [852, '6308.00'], [922, '0'], [953, '-100'], [984, '-200']]) +
    tag(845, 886, 865, '6307.25', WHITE, BG) +
    times(1015, 1004, [[239, '9:57'], [277, '9:57:49'], [322, '9:58:40'], [367, '9:59:29'], [415, '10:00:24'], [466, '10:01:31'],
        [517, '10:02:50'], [568, '10:03:53'], [619, '10:04:53'], [670, '10:06:03'], [721, '10:07:16'], [772, '10:08:27'], [823, '10:09:43']]) +
    tag(190, 220, 1015, '-11-6', WHITE, BG) + tag(868, 890, 1015, '0 L', '#f00', WHITE));

// ---- Numbers bars: bid|ask per price row, p/r/c/g colour the number, * boxes the row
const TOP = 176, PITCH = 17.24;
const rowY = n => Math.round(TOP + PITCH * n);
const columns = [
    [6, '8 35c', '30 65c', '69 162c', '187 145*', '143p 66', '12r 0'],
    [2, '0 58g', '34 56c', '21 43c', '44 44', '33p 17', '63p 33*', '42 42', '11p 3'],
    [3, '4 68c', '38 27', '58 79c', '109 125*', '119p 63', '41 40', '67 70', '10r 0'],
    [7, '9p 2', '28 30', '54 40', '98p 16', '77p 47', '96 81*', '114p 44', '127p 46', '52p 22'],
    [13, '2 5c', '5 10c', '6 9c', '62p 2', '17p 4', '45 41', '54p 2', '34 39', '106p 65', '93 131', '109 137', '116p 35', '61 48',
        '80 88', '118 80', '143 111*', '127 98', '16r 0'],
    [19, '16 47c', '45 49', '42 88c', '39 147c', '315p 207*', '47p 20', '21 16', '14 24c', '2 4c'],
    [21, '16 28c', '27 50c', '35 47', '36p 13', '9 39c', '77 119c', '130p 82*', '92p 7', '14p 1', '8r 0'],
    [22, '5 106c', '29 44c', '17 48c', '78 92*', '100p 55', '67p 44', '14 31c', '22 31', '44p 26', '34 45', '62p 22', '22r 0'],
    [23, '0 4g', '44 69c', '63 55*', '48 61', '54 62', '41 36', '13p 3', '9r 0'],
    [20, '0 19g', '16 49c', '35 40*', '20 46c', '41 31', '21p 14', '37 32', '23p 11', '31p 13', '35p 22', '8r 0']
];
const cellColor = { p: '#f080d0', r: '#b01840', c: '#80b4d0', g: '#187830' };
let grid = '';
columns.forEach(([first, ...rows], c) => {
    const x = 952 + 72 * c;
    rows.forEach((row, i) => {
        const y = rowY(first + i);
        const [bid, ask] = row.replace('*', '').split(' ');
        const bidColor = cellColor[bid.slice(-1)], askColor = cellColor[ask.slice(-1)];
        grid += text(x - 4, y + 1, parseInt(bid), bidColor || WHITE, 'end', parseInt(bid) >= 30 ? 'heavy' : 'cell') +
            text(x + 5, y + 1, parseInt(ask), askColor || WHITE, 'start', parseInt(ask) >= 30 ? 'heavy' : 'cell') +
            rect(x, y - 5, 1, 13, bidColor || askColor || '#c8d0f0');
        if (row.endsWith('*')) grid += rect(x - 31, y - 8, 61, 15, 'none', '#ffff40', 2);
    });
});
// column, first row, last row, colour
[[1, 5, 7, '#f48088'], [2, 7, 7, '#f48088'], [3, 7, 13, '#f48088'], [4, 13, 25, '#f48088'], [5, 22, 25, '#b8ff90'],
    [6, 21, 30, '#f48088'], [7, 27, 30, '#b8ff90'], [8, 24, 26, '#b8ff90'], [9, 24, 29, '#f48088']].forEach(([c, a, b, color]) => {
    for (let n = a; n <= b; n++) grid += rect(912 + 72 * c, rowY(n) - 9, 5, 16, color);
});
for (let n = 6; n <= 8; n++) grid += rect(915, rowY(n) - 9, 2, 16, PALE);

const edges = [1780, 1777, 1772, 1766, 1765, 1770, 1765, 1768, 1764, 1759, 1763, 1768, 1761, 1761, 1759, 1762, 1768, 1764, 1758, 1763, 1760,
    1754, 1752, 1744, 1751, 1735, 1717, 1722, 1726, 1725, 1730, 1735, 1725, 1728, 1722, 1724, 1719, 1713, 1697, 1720, 1711, 1723, 1710];

const diffs = [[918, 922, 917, 923, 1], [917, 922, 912, 922, 1], [918, 922, 915, 922, 1], [920, 940, 920, 940, 0], [920, 938, 919, 951, 0],
    [916, 921, 914, 926, 1], [920, 924, 917, 924, 0], [917, 921, 912, 926, 1], [919, 921, 919, 922, 1], [919, 921, 914, 921, 1]];
const diffBars = diffs.map(([top, bot, hi, lo, up], i) => {
    const x = 949 + 72 * i, stroke = up ? '#30c840' : '#d02020';
    return vline(x, hi, lo, stroke) + rect(x - 21.5, top + 0.5, 42, bot - top - 1, up ? '#008000' : '#900000', stroke);
}).join('');
const ask = [51, 34, -327, -287, 62, -58, 50, 18, 10], total = [541, 910, 983, 2097, 1142, 830, 1038, 562, 544];

let ladder = '';
[3, 33, 59, 52, 61, 54, 47, 59, 52, 50].forEach((v, i) => ladder += text(1809, rowY(27 + i), v, WHITE, 'end', 'ladder'));
[66, 66, 59, 62, 53, 54, 35, 29, 35, 31].forEach((v, i) => ladder += text(1879, rowY(17 + i), v, WHITE, 'start', 'ladder'));
for (let i = 0; i <= 20; i++) ladder += text(1825, rowY(i * 2), (6314.5 - i * 0.5).toFixed(2));

draw('bars', '910 139 998 883',
    steps(1783, 167, PITCH, edges, i => i === 38 ? OLIVE : i < 21 ? GRAY : PURPLE) +
    rect(1700, 896, 84, 20, BG) +
    grid +
    dashed('948,201 1010,195 1033,191 1077,182 1107,178 1133,174 1163,171 1233,169 1300,168 1420,170 1597,171') +
    dashed('949,516 1058,500 1130,496 1180,492 1217,490 1280,488 1317,487 1597,486') +
    line('948,831 1065,823 1176,813 1308,805 1445,803 1597,798', DASH) +
    `<path d="M938 305L947 309V318L938 322Z M1226 546L1236 555L1226 564Z" fill="${YELLOW}"/>` +
    vline(1235, 700, 712, PALE) + flag(1179, 1237, 719, '1@6309.00') +
    rect(913.5, 262.5, 388, 417, 'none', '#f88030', 5) +
    rect(1785, 631, 29, 172, '#0000ff') + rect(1874, 459, 30, 172, '#e00000') +
    vline(1784, 139, 896, '#208040') + vline(1815, 139, 896, '#208040') + vline(1874, 139, 896, '#a01828') + vline(1905, 139, 896, '#a01828') +
    tag(1824, 1865, rowY(29), '6307.25', WHITE, BG) + ladder +
    text(1789, 151, 'Buy', '#209040') + text(1880, 151, 'Sell', '#a01828') +
    diffBars +
    text(915, 904, 'Ask/Bid Volume Difference Bars') + text(1088, 904, 'Open: 0', '#20f040') +
    text(1135, 904, 'High: 98', '#108838') + text(1185, 904, 'Low: -8', '#e01828') + text(1231, 904, 'Close: 10', '#780820') +
    text(910, 977, 'AskV - BidV:', '#20d040') + text(910, 994, 'Total Vol:') +
    ask.map((v, i) => text(1020 + 72 * i, 977, v, v > 0 ? '#20d040' : '#c82038', 'middle')).join('') +
    total.map((v, i) => text(1020 + 72 * i, 994, v, '', 'middle')).join('') +
    vline(1784, 896, 1002, WHITE) + hline(910, 1785, 1002, WHITE) + hline(1785, 1789, 920, WHITE) + text(1789, 920, '0') +
    times(1014, 1002, [[1020, '9:52'], [1092, '9:54'], [1164, '9:56'], [1236, '9:58'], [1309, '10:00'], [1381, '10:02'], [1453, '10:04'],
        [1525, '10:06'], [1597, '10:08'], [1669, '10:10'], [1741, '10:12']]) +
    tag(921, 976, 1014, '2017-11-6', WHITE, BG) + tag(1878, 1906, 1014, '71 L', '#f00', WHITE));
```
